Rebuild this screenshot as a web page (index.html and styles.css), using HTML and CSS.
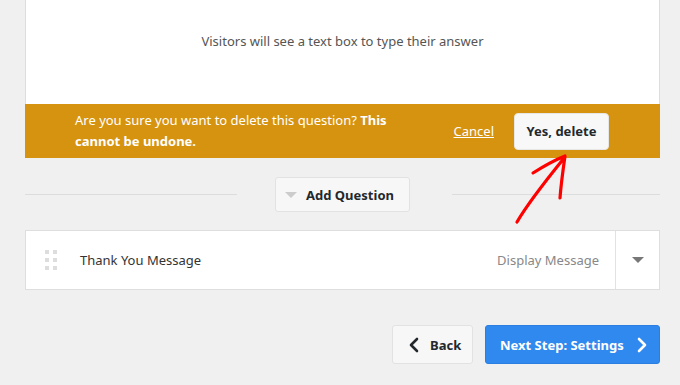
FILE: index.html
```html
<!DOCTYPE html>
<html lang="en">
<head>
    <meta charset="UTF-8">
    <title>Questions</title>
    <link rel="stylesheet" href="styles.css">
</head>
<body>
    <div class="page">
        <div class="question-card">
            <div class="question-body">
                <p>Visitors will see a text box to type their answer</p>
            </div>
            <div class="confirm-bar">
                <p class="confirm-text">Are you sure you want to delete this question? <strong>This</strong><br><strong>cannot be undone.</strong></p>
                <a href="#" class="cancel-link">Cancel</a>
                <button class="confirm-btn">Yes, delete</button>
            </div>
        </div>

        <div class="add-row">
            <span class="line left"></span>
            <button class="add-btn"><span class="caret light"></span>Add Question</button>
            <span class="line"></span>
        </div>

        <div class="message-row">
            <div class="row-main">
                <span class="drag">
                    <i></i><i></i><i></i><i></i><i></i><i></i>
                </span>
                <span class="row-title">Thank You Message</span>
                <span class="row-type">Display Message</span>
            </div>
            <div class="row-toggle"><span class="caret"></span></div>
        </div>

        <div class="nav-row">
            <button class="back-btn">
                <svg width="12" height="16" viewBox="0 0 12 16"><path d="M9 2 L3 8 L9 14" fill="none" stroke="#23282d" stroke-width="2.6" stroke-linecap="round" stroke-linejoin="round"/></svg>
                Back
            </button>
            <button class="next-btn">
                Next Step: Settings
                <svg width="12" height="16" viewBox="0 0 12 16"><path d="M3 2 L9 8 L3 14" fill="none" stroke="#fff" stroke-width="2.6" stroke-linecap="round" stroke-linejoin="round"/></svg>
            </button>
        </div>
    </div>

    <svg class="arrow" width="680" height="385" viewBox="0 0 680 385">
        <path d="M517 222 C530 200 548 178 565 157 M533 173 C544 166 555 160 565 156 C563 170 561 184 560 198" fill="none" stroke="#ff0000" stroke-width="3.2" stroke-linecap="round" stroke-linejoin="round"/>
    </svg>
</body>
</html>
```

FILE: styles.css
```css
* {
    margin: 0;
    padding: 0;
    box-sizing: border-box;
}

body {
    background: #f0f0f0;
    font-family: 'Noto Sans', 'Open Sans', sans-serif;
    font-size: 13px;
    color: #444;
    width: 680px;
    height: 385px;
    overflow: hidden;
    position: relative;
}

.page {
    padding: 0 20px 0 25px;
}

.question-card {
    background: #fff;
    border: 1px solid #ddd;
    border-top: none;
}

.question-body {
    height: 104px;
    text-align: center;
    padding-top: 32px;
    color: #555;
}

.confirm-bar {
    background: #d69310;
    height: 54px;
    margin: 0 -1px -1px;
    display: flex;
    align-items: center;
    padding: 0 51px 0 50px;
    color: #fff;
}

.confirm-text {
    width: 355px;
    line-height: 21px;
    flex: none;
}

.confirm-text strong {
    font-weight: 700;
}

.cancel-link {
    color: #fff;
    text-decoration: underline;
    margin-left: auto;
    margin-right: 20px;
}

.confirm-btn {
    background: #f8f8f8;
    border: 1px solid #e6e6e6;
    border-radius: 4px;
    font-family: inherit;
    font-size: 13px;
    font-weight: 700;
    color: #23282d;
    width: 95px;
    height: 37px;
}

.add-row {
    display: flex;
    align-items: center;
    margin-top: 19px;
    height: 35px;
}

.line {
    flex: 1;
    height: 1px;
    background: #dcdcdc;
}

.line.left {
    flex: none;
    width: 212px;
}

.add-btn {
    width: 135px;
    height: 35px;
    margin: 0 42px 0 38px;
    background: #f7f7f7;
    border: 1px solid #e2e2e2;
    border-radius: 3px;
    font-family: inherit;
    font-size: 13px;
    font-weight: 700;
    color: #23282d;
    display: flex;
    align-items: center;
    justify-content: center;
    gap: 9px;
}

.caret {
    width: 0;
    height: 0;
    border-left: 6px solid transparent;
    border-right: 6px solid transparent;
    border-top: 6px solid #777;
}

.caret.light {
    border-top-color: #ccc;
    margin-left: -6px;
}

.message-row {
    display: flex;
    margin-top: 18px;
    height: 60px;
    background: #fff;
    border: 1px solid #dedede;
}

.row-main {
    flex: 1;
    display: flex;
    align-items: center;
    padding: 0 16px 0 19px;
    border-right: 1px solid #e2e2e2;
}

.drag {
    display: grid;
    grid-template-columns: 4px 4px;
    gap: 4px 4px;
    margin-right: 23px;
}

.drag i {
    width: 4px;
    height: 4px;
    background: #ddd;
}

.row-title {
    color: #333;
}

.row-type {
    margin-left: auto;
    color: #888;
}

.row-toggle {
    width: 43px;
    display: flex;
    align-items: center;
    justify-content: center;
}

.nav-row {
    display: flex;
    justify-content: flex-end;
    gap: 12px;
    margin-top: 35px;
}

.back-btn, .next-btn {
    height: 39px;
    border-radius: 3px;
    font-family: inherit;
    font-size: 13px;
    font-weight: 700;
    display: flex;
    align-items: center;
    gap: 12px;
}

.back-btn {
    width: 81px;
    padding-left: 15px;
    gap: 10px;
    background: #f7f7f7;
    border: 1px solid #e2e2e2;
    color: #23282d;
}

.next-btn {
    width: 175px;
    padding-left: 14px;
    background: #2f89ef;
    border: 1px solid #2a7fe0;
    color: #fff;
}

.arrow {
    position: absolute;
    left: 0;
    top: 0;
    pointer-events: none;
}
```
